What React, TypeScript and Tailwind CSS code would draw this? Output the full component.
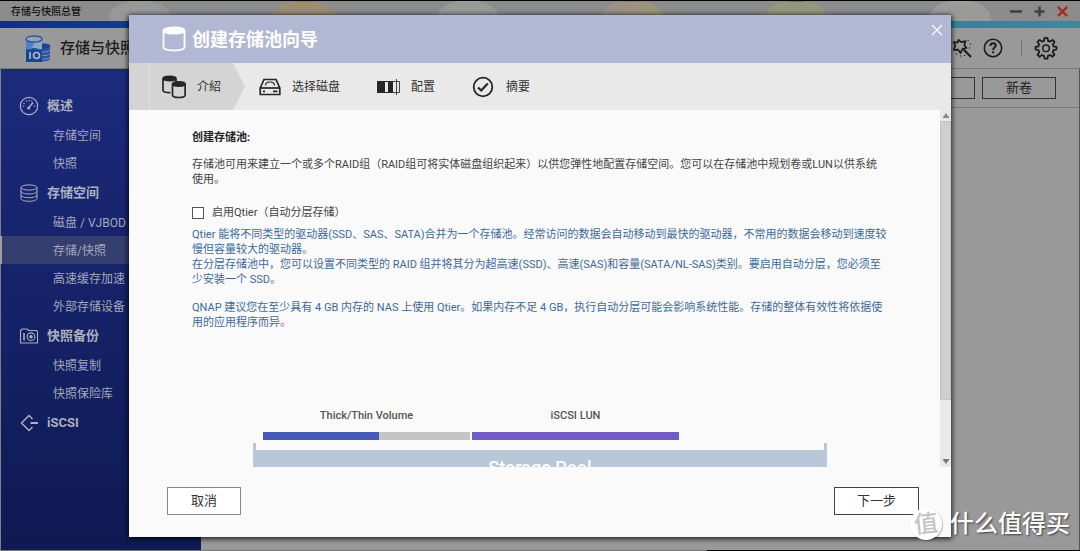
import React from "react";

type IconProps = { className?: string };

const bubbles = [
  { cx: 140, fill: "#989898", cap: "#9c9c9c" },
  { cx: 304, fill: "#9c8e73", cap: "#a0752f" },
  { cx: 468, fill: "#979a97", cap: "#9fa4a8" },
  { cx: 632, fill: "url(#bubbleMix)", cap: "#a3801c" },
  { cx: 796, fill: "#95977a", cap: "#5f8a1d" },
  { cx: 960, fill: "#999b99", cap: "#a0a3a0" },
];

const menu = [
  { title: "概述", icon: GaugeIcon, items: ["存储空间", "快照"] },
  { title: "存储空间", icon: DisksIcon, items: ["磁盘 / VJBOD", "存储/快照", "高速缓存加速", "外部存储设备"] },
  { title: "快照备份", icon: CameraIcon, items: ["快照复制", "快照保险库"] },
  { title: "iSCSI", icon: IscsiIcon, items: [] },
];

function GaugeIcon() {
  return (
    <svg width="20" height="20" viewBox="0 0 20 20" fill="none" stroke="currentColor" strokeWidth="1.2">
      <circle cx="10" cy="10" r="8.7" />
      <path d="M10 11.5 14 6.5" strokeWidth="1.6" />
      <circle cx="9.6" cy="12" r="1.5" fill="currentColor" stroke="none" />
      <path d="M3.600 10h1.600M14.800 10h1.600M10 3.800v1.600M7 4.400l.6 1.400M13 4.400l-.5 1.200M4.400 7.200l1.400.6" strokeWidth="1.100" />
    </svg>
  );
}

function DisksIcon() {
  return (
    <svg width="20" height="20" viewBox="0 0 20 20" fill="none" stroke="currentColor" strokeWidth="1">
      <ellipse cx="10" cy="4.5" rx="8" ry="2.6" />
      <path d="M2 4.5v11c0 1.5 3.600 2.800 8 2.800s8-1.300 8-2.800v-11" />
      <path d="M2 8.200c0 1.500 3.600 2.800 8 2.800s8-1.300 8-2.800M2 11.900c0 1.500 3.600 2.800 8 2.800s8-1.300 8-2.800" />
    </svg>
  );
}

function CameraIcon() {
  return (
    <svg width="20" height="20" viewBox="0 0 20 20" fill="none" stroke="currentColor" strokeWidth="1.100">
      <path d="M1.500 17V4.500L3 3h5l1.500 1.500h8L18.500 5.500V17z" />
      <path d="M5 7v7.500" strokeWidth="1.500" />
      <circle cx="12" cy="10.700" r="3.800" />
      <circle cx="12" cy="10.700" r="1.200" fill="currentColor" />
    </svg>
  );
}

function IscsiIcon() {
  return (
    <svg width="20" height="20" viewBox="0 0 20 20" fill="none" stroke="currentColor" strokeWidth="1.500">
      <path d="M13.500 6 10 2.500 2.500 10l7.500 7.500 3.500-3.500" />
      <path d="M11.500 10H19" strokeWidth="2" />
    </svg>
  );
}

function AppLogo() {
  return (
    <svg width="26" height="27" viewBox="0 0 26 27">
      <path d="M13 11c2-2 10.500-2 12 0v13c-1 1.800-5 2.600-8 2.400z" fill="#2a50a6" />
      <ellipse cx="19" cy="11" rx="6.500" ry="2.600" fill="#1b3f9c" />
      <path d="M16 17.200c3.500 0 7.500-.5 9-1.900M16 20.700c3.500 0 7.500-.5 9-1.900M16 24.200c3.500 0 7.500-.5 9-1.900" fill="none" stroke="#8b9abb" strokeWidth=".9" />
      <path d="M1 4v11h16V4z" fill="#4f7fc4" />
      <path d="M9 6h8v8L6 13c2-1 3-4 3-7z" fill="#8fa3c4" />
      <ellipse cx="9" cy="4" rx="8" ry="3" fill="#9aa2ae" stroke="#2459ae" strokeWidth="1.300" />
      <path d="M1 14.500h5l1.200-1.300h4.200l1.200 1.300H17V27H1z" fill="#15478f" />
      <path d="M5 17v7" stroke="#a9b4c6" strokeWidth="1.700" />
      <circle cx="11.500" cy="20.500" r="3" fill="none" stroke="#a9b4c6" strokeWidth="1.700" />
    </svg>
  );
}

function WandIcon() {
  return (
    <svg width="20" height="20" viewBox="0 0 20 20" fill="none" stroke="currentColor" strokeWidth="1.700" strokeLinejoin="round">
      <path d="m6.500 1.800 2.700 2.400 4.300-1L12.300 7l2.200 3-4 .9L8.500 15 6 11.600l-4.200.4 1.500-4.200L1.600 4.200l3.900.4z" />
      <path d="m11.500 11.500 7.500 7.500" strokeWidth="2" />
      <path d="M15.500 2.500h1.200M17.800 6H19M17 10h1.200M4 15.800h1.200M8 18h1.200M12 17.500h1.200" strokeWidth="1.200" />
    </svg>
  );
}

function HelpIcon() {
  return (
    <svg width="20" height="20" viewBox="0 0 20 20" fill="none" stroke="currentColor" strokeWidth="1.600">
      <circle cx="10" cy="10" r="8.700" />
      <path d="M7.400 8c0-1.700 1.100-2.700 2.700-2.700s2.600 1 2.600 2.300c0 2-2.600 2-2.600 4.300" strokeWidth="2" />
      <path d="M10.100 13.300v1.900" strokeWidth="2" />
    </svg>
  );
}

function GearIcon() {
  return (
    <svg width="24" height="24" viewBox="0 0 24 24" fill="none" stroke="currentColor" strokeWidth="1.800" strokeLinejoin="round">
      <path d="M10.600 1.800h2.800l.6 3 2 .8 2.500-1.700 2 2-1.700 2.500.8 2 2.900.6v2.500l-2.900.7-.8 2 1.700 2.500-2 2-2.500-1.700-2 .8-.6 2.900h-2.800l-.6-2.900-2-.8-2.500 1.700-2-2 1.700-2.500-.8-2-2.900-.7V11l2.900-.6.800-2-1.700-2.500 2-2L8 5.600l2-.8z" />
      <circle cx="12" cy="12.200" r="3.300" strokeWidth="1.500" />
    </svg>
  );
}

function PoolIcon() {
  return (
    <svg width="24" height="26" viewBox="0 0 24 26" fill="none" stroke="#fff" strokeWidth="1.800">
      <path d="M1.500 4.500v16.800c0 1.900 4.700 3.200 10.500 3.200s10.500-1.300 10.500-3.200V4.500" />
      <ellipse cx="12" cy="4.500" rx="10.500" ry="3" fill="#fff" />
    </svg>
  );
}

function PoolsIcon() {
  return (
    <svg width="24" height="24" viewBox="0 0 24 24" fill="none" stroke="#262626" strokeWidth="1.700">
      <path d="M1 3.500v12c0 1.200 2.500 2.200 7.500 2.200M14 3.500v4" />
      <ellipse cx="7.500" cy="3.500" rx="6.500" ry="2.200" fill="#262626" />
      <path d="M10.500 9v11c0 1.400 2.800 2.500 6.300 2.500s6.300-1.100 6.300-2.500V9" fill="#d4d4d4" />
      <ellipse cx="16.800" cy="9" rx="6.300" ry="2.200" fill="#262626" />
    </svg>
  );
}

function DriveIcon() {
  return (
    <svg width="22" height="18" viewBox="0 0 22 18" fill="none" stroke="#262626" strokeWidth="1.700">
      <path d="M1.200 10 5 1.500h12L20.800 10v6.500H1.200z" />
      <path d="M1.500 10h19" />
      <path d="M6.500 7.500C6.500 5 8.500 4 11 4s4.500 1 4.500 3.500" strokeWidth="1.200" />
      <path d="M4 13.300h2M14 13.300h4.500" />
    </svg>
  );
}

function ConfigIcon() {
  return (
    <svg width="23" height="16" viewBox="0 0 23 16">
      <path d="M0 2h8v12H0zM11 2h5v12h-5z" fill="#262626" />
      <path d="M.500 2.500h15v11H.500z" fill="none" stroke="#262626" />
      <path d="M16 2.500h6.500v11H16M19.500 0v16" fill="none" stroke="#444" />
    </svg>
  );
}

function SummaryIcon() {
  return (
    <svg width="22" height="22" viewBox="0 0 22 22" fill="none" stroke="#262626">
      <circle cx="11" cy="11" r="9.300" strokeWidth="1.800" />
      <path d="m6 11.500 3.200 3L15.800 7.500" strokeWidth="2.200" />
    </svg>
  );
}

function CloseIcon({ className }: IconProps) {
  return (
    <svg className={className} width="12" height="12" viewBox="0 0 12 12" fill="none" stroke="currentColor" strokeWidth="1.200">
      <path d="m1 1 10 10M11 1 1 11" />
    </svg>
  );
}

function TitleBar() {
  return (
    <div className="relative flex h-[21px] items-center justify-between border-t border-black bg-[#8c8c8c] pl-[11px] pr-3">
      <svg className="absolute left-0 top-0" width="1080" height="20" viewBox="0 0 1080 20" aria-hidden="true">
        <defs>
          <linearGradient id="bubbleMix">
            <stop offset="0" stopColor="#9e8d90" />
            <stop offset="1" stopColor="#989970" />
          </linearGradient>
        </defs>
        {bubbles.map((b) => (
          <g key={b.cx}>
            <ellipse cx={b.cx} cy="17" rx="31" ry="18" fill={b.fill} />
            <ellipse cx={b.cx} cy="-2" rx="18" ry="3" fill={b.cap} />
          </g>
        ))}
      </svg>
      <span className="relative pt-px text-[10px] font-medium leading-5 text-[#111]">存储与快照总管</span>
      <div className="relative flex items-center gap-3">
        <button aria-label="最小化" className="text-[#3d4045]">
          <svg width="12" height="11" viewBox="0 0 12 11"><path d="M0 5.500h12" stroke="currentColor" strokeWidth="2.500" /></svg>
        </button>
        <button aria-label="最大化" className="text-[#3d4045]">
          <svg width="11" height="11" viewBox="0 0 11 11"><path d="M.500 5.500h10M5.500.500v10" stroke="currentColor" strokeWidth="2.500" /></svg>
        </button>
        <button aria-label="关闭" className="text-[#a32c22]">
          <svg width="11" height="11" viewBox="0 0 10 10"><path d="m.800.800 8.400 8.400M9.200.800.800 9.200" stroke="currentColor" strokeWidth="2" /></svg>
        </button>
      </div>
    </div>
  );
}

function Sidebar() {
  return (
    <nav className="w-[201px] shrink-0 border-l border-[#7d8087] bg-gradient-to-b from-[#1b2a7c] to-[#0f1a52] pt-[21px] text-[#a3a7b8]">
      {menu.map((group) => (
        <div key={group.title}>
          <a href="#" className="flex h-[31px] items-center gap-2 pl-[18px] text-[13px] font-bold text-[#acafbd]">
            <group.icon />
            {group.title}
          </a>
          {group.items.map((item) => (
            <a
              key={item}
              href="#"
              className={
                item === "存储/快照"
                  ? "-ml-px flex h-7 items-center border-l-2 border-[#a0a0a0] bg-[#343f70] pl-[51px] pt-px text-xs"
                  : "flex h-7 items-center pl-[52px] pt-px text-xs"
              }
            >
              {item}
            </a>
          ))}
        </div>
      ))}
    </nav>
  );
}

function Steps() {
  return (
    <ol className="flex h-[47px] shrink-0 items-stretch bg-[#e9e9e9] text-xs text-[#333]">
      <li className="flex">
        <span className="w-[21px] border-r border-[#e2e2e2] bg-[#d4d4d4]" />
        <span className="flex w-[83px] items-center gap-[11px] bg-[#d4d4d4] pl-3">
          <PoolsIcon />
          介紹
        </span>
        <svg width="12" height="47" viewBox="0 0 12 47"><path d="M0 0 12 23.500 0 47z" fill="#d4d4d4" /></svg>
      </li>
      <li className="flex items-center gap-[11px] pl-[14px]"><DriveIcon />选择磁盘</li>
      <li className="flex items-center gap-[11px] pl-[37px]"><ConfigIcon />配置</li>
      <li className="flex items-center gap-3 pl-[37px]"><SummaryIcon />摘要</li>
    </ol>
  );
}

function PoolChart() {
  return (
    <div className="ml-[61px] mt-[78px] w-[574px]">
      <div className="ml-[10px] flex gap-[2px] text-center text-[11px] font-medium leading-4 text-[#555]">
        <div className="w-[207px]">
          Thick/Thin Volume
          <div className="mt-2 flex h-2">
            <div className="w-[116px] bg-[#4559bd]" />
            <div className="flex-1 bg-[#c5c5c5]" />
          </div>
        </div>
        <div className="w-[207px]">
          iSCSI LUN
          <div className="mt-2 h-2 bg-[#7359ca]" />
        </div>
      </div>
      <div className="mt-[3px] h-[7px] border-x-[3px] border-[#b8c8d8]" />
      <div className="h-12 bg-[#b8c8d8] pt-[6px] text-center text-lg font-medium leading-6 text-white">Storage Pool</div>
    </div>
  );
}

function ScrollBar() {
  return (
    <div className="flex w-[11px] shrink-0 flex-col items-center bg-[#e9e9e9]">
      <svg width="8" height="11" viewBox="0 0 8 11"><path d="M4 3 7.500 8h-7z" fill="#888" /></svg>
      <div className="h-[279px] w-full border border-[#c4c4c4] bg-[#cfcfcf]" />
      <svg className="mt-auto" width="8" height="11" viewBox="0 0 8 11"><path d="M4 8 .500 3h7z" fill="#777" /></svg>
    </div>
  );
}

function Wizard() {
  return (
    <div className="absolute inset-0 px-[129px] pb-[14px] pt-[15px]">
      <section role="dialog" aria-labelledby="wizard-title" className="flex h-full flex-col bg-[#fafafa] shadow-[0_1px_5px_1px_rgba(0,0,0,0.8)]">
        <header className="flex h-12 shrink-0 items-center gap-[6px] bg-[#b2b7d3] pl-[33px] pr-2">
          <PoolIcon />
          <h2 id="wizard-title" className="pt-px text-lg font-bold text-white">创建存储池向导</h2>
          <button aria-label="关闭向导" className="mb-[19px] ml-auto text-white"><CloseIcon /></button>
        </header>
        <Steps />
        <div className="flex min-h-0 flex-1">
          <div className="min-w-0 flex-1 overflow-hidden whitespace-nowrap pl-[63px] pt-5 text-[11px] leading-[15px] text-[#444]">
            <h3 className="font-bold text-[#222]">创建存储池:</h3>
            <p className="mt-3">
              存储池可用来建立一个或多个RAID组（RAID组可将实体磁盘组织起来）以供您弹性地配置存储空间。您可以在存储池中规划卷或LUN以供系统<br />
              使用。
            </p>
            <label className="mt-[18px] flex items-center gap-2">
              <input type="checkbox" className="h-3 w-3 appearance-none border border-[#555] bg-white" />
              启用Qtier（自动分层存储）
            </label>
            <div className="mt-[7px] text-[#3c6a9c]">
              <p>
                Qtier 能将不同类型的驱动器(SSD、SAS、SATA)合并为一个存储池。经常访问的数据会自动移动到最快的驱动器，不常用的数据会移动到速度较<br />
                慢但容量较大的驱动器。<br />
                在分层存储池中，您可以设置不同类型的 RAID 组并将其分为超高速(SSD)、高速(SAS)和容量(SATA/NL-SAS)类别。要启用自动分层，您必须至<br />
                少安装一个 SSD。
              </p>
              <p className="mt-[13px]">
                QNAP 建议您在至少具有 4 GB 内存的 NAS 上使用 Qtier。如果内存不足 4 GB，执行自动分层可能会影响系统性能。存储的整体有效性将依据使<br />
                用的应用程序而异。
              </p>
            </div>
            <PoolChart />
          </div>
          <ScrollBar />
        </div>
        <footer className="flex h-[70px] shrink-0 justify-between pl-[38px] pr-8 pt-5 text-[13px] text-[#333]">
          <button className="h-7 w-[74px] border border-[#888] bg-white">取消</button>
          <button className="h-7 w-[85px] border border-[#444] bg-white">下一步</button>
        </footer>
      </section>
    </div>
  );
}

export default function App() {
  return (
    <div className="relative flex min-h-screen flex-col overflow-hidden bg-[#999] font-['Roboto','Noto_Sans_CJK_SC',sans-serif]">
      <TitleBar />
      <div className="h-[7px] bg-gradient-to-r from-[#122a94] via-[#25649a] to-[#348d9c]" />
      <header className="flex h-[41px] items-center border-b border-[#777] pl-[25px] pr-[22px] text-[#1c1c1c]">
        <AppLogo />
        <h1 className="ml-[9px] pt-px text-[15px] font-medium">存储与快照总管</h1>
        <div className="ml-auto flex items-center">
          <button aria-label="向导"><WandIcon /></button>
          <button aria-label="帮助" className="ml-[11px]"><HelpIcon /></button>
          <span className="ml-[18px] h-[18px] w-px bg-[#77776f]" />
          <button aria-label="设置" className="ml-3"><GearIcon /></button>
        </div>
      </header>
      <div className="flex flex-1">
        <Sidebar />
        <main className="flex-1 border-r border-[#555]">
          <div className="flex h-[39px] items-center justify-end gap-[7px] border-b border-[#777] pr-[23px] text-[13px] text-[#222]">
            <button className="h-[22px] w-[74px] border border-[#333]" aria-label="扩充" />
            <button className="h-[22px] w-[74px] border border-[#333]">新卷</button>
          </div>
        </main>
      </div>
      <div className="flex h-px">
        <div className="w-[707px] bg-[#777]" />
        <div className="flex-1 bg-black" />
      </div>
      <Wizard />
      <div className="absolute bottom-[11px] right-[10px] flex items-center gap-2 text-white">
        <span className="flex h-8 w-8 items-center justify-center rounded-full bg-white text-2xl font-medium leading-8 text-[#c4c4c4] shadow-[1px_1px_1px_rgba(0,0,0,0.25)]">
          <span className="-rotate-6">值</span>
        </span>
        <span className="text-2xl font-medium leading-8 [text-shadow:1px_1px_2px_rgba(0,0,0,0.6)]">什么值得买</span>
      </div>
    </div>
  );
}
